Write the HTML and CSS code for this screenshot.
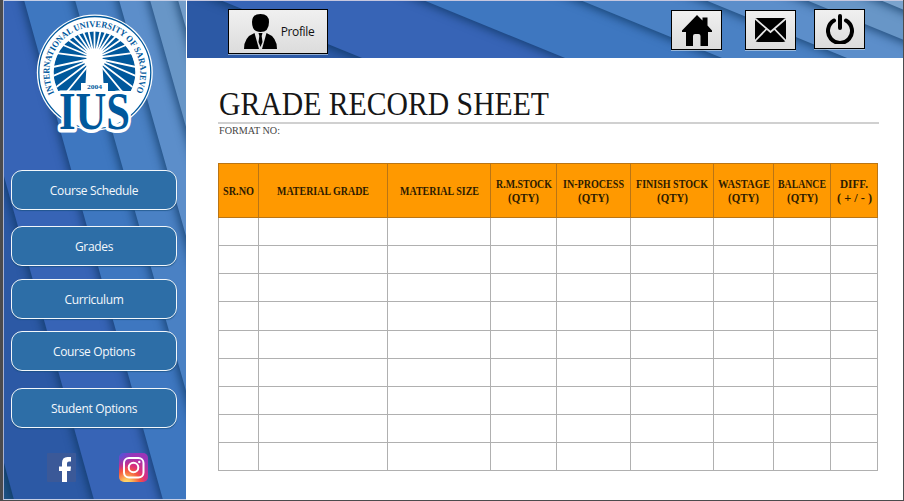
FILE: index.html
```html
<!DOCTYPE html>
<html lang="en">
<head>
<meta charset="utf-8">
<title>IUS Student Portal</title>
<link rel="stylesheet" href="styles.css">
</head>
<body>
<div class="window">
  <aside class="sidebar">
    <svg class="backdrop" viewBox="4 1 182 499" preserveAspectRatio="none" aria-hidden="true">
      <rect x="0" y="0" width="190" height="501" fill="#205486"/>
      <path class="band" fill="#2c59a5" d="M-121 0L14 501H260V-20H-126Z"/>
      <path class="band" fill="#3764b6" d="M-45 0L94 501H260V-20H-50Z"/>
      <path class="band" fill="#3e77c0" d="M24 0L163 501H260V-20H18Z"/>
      <path class="band" fill="#4a81c4" d="M75 0L217 501H260V-20H69Z"/>
      <path class="band" fill="#5c8eca" d="M119 0L261 501H280V-20H113Z"/>
      <path class="band" fill="#6896c7" d="M150 0L292 501H300V-20H144Z"/>
      <path class="band" fill="#739dca" d="M178 0L320 501H330V-20H172Z"/>
    </svg>
    <svg class="logo" viewBox="35 12 120 124" role="img" aria-label="International University of Sarajevo">
      <defs>
        <path id="ring" d="M54.3 93.2A45.500 45.500 0 1 1 135.3 93.2"/>
        <clipPath id="disc"><path d="M58.2 91A41 41 0 1 1 130.8 91Z"/></clipPath>
      </defs>
      <circle cx="94.8" cy="72.5" r="58" fill="#fff"/>
      <circle cx="94.8" cy="72.5" r="56" fill="none" stroke="#00589c" stroke-width="1.3"/>
      <g clip-path="url(#disc)">
        <circle cx="94.5" cy="72.5" r="41" fill="#00589c"/>
        <path stroke="#fff" stroke-width="1.8" d="M94.5 58L30 107M94.5 58L52 110M94.5 58L30 86M94.5 58L30 72M94.5 58L40 51M94.5 58L46 38M94.5 58L54 30M94.5 58L62 25M94.5 58L70 22M94.5 58L78 20M94.5 58L86 20M94.5 58V20M94.5 58L103 20M94.5 58L111 20M94.5 58L119 22M94.5 58L127 25M94.5 58L135 30M94.5 58L143 38M94.5 58L149 51M94.5 58L159 72M94.5 58L159 86M94.5 58L159 107M94.5 58L137 110"/>
        <path fill="#fff" d="M81 92V83H85.5L86.5 66L82 60L86.5 61V56Q87 49 94.5 48.5Q102 49 102.5 56V61L107 60L102.500 66L103.500 83H108V92Z"/>
      </g>
      <text class="ring-text"><textPath href="#ring" textLength="184" lengthAdjust="spacingAndGlyphs">INTERNATIONAL UNIVERSITY OF SARAJEVO</textPath></text>
      <text class="ius" x="59" y="129" textLength="71" lengthAdjust="spacingAndGlyphs">IUS</text>
      <text class="year" x="87" y="88.500" textLength="15" lengthAdjust="spacingAndGlyphs">2004</text>
    </svg>
    <nav class="menu">
      <button class="item">Course Schedule</button>
      <button class="item grades">Grades</button>
      <button class="item curriculum">Curriculum</button>
      <button class="item courses">Course Options</button>
      <button class="item students">Student Options</button>
    </nav>
    <div class="social">
      <svg width="29" height="29" viewBox="0 0 29 29" role="img" aria-label="Facebook">
        <rect width="29" height="29" rx="1" fill="#3b5998"/>
        <path fill="#fff" d="M15 29V18H12V13.500H15V10Q15 4 20.500 4H24V8.500H22Q20 8.500 20 10.500V13.500H24L23.500 18H20V29Z"/>
      </svg>
      <svg width="29" height="29" viewBox="0 0 29 29" role="img" aria-label="Instagram">
        <defs>
          <radialGradient id="warm" cx=".27" cy="1.050" r="1">
            <stop offset="0" stop-color="#ffe27a"/><stop offset=".15" stop-color="#fdc45a"/><stop offset=".45" stop-color="#f4573f"/><stop offset=".65" stop-color="#d92e7f"/><stop offset="1" stop-color="#9b35b8"/>
          </radialGradient>
          <radialGradient id="cool" cx="0" cy="0" r=".6">
            <stop offset="0" stop-color="#3c5fe0"/><stop offset="1" stop-color="#8038c8" stop-opacity="0"/>
          </radialGradient>
        </defs>
        <rect width="29" height="29" rx="5" fill="url(#warm)"/>
        <rect width="29" height="29" rx="5" fill="url(#cool)"/>
        <g fill="none" stroke="#fff" stroke-width="2"><rect x="5" y="5" width="19.500" height="19.500" rx="5"/><circle cx="14.500" cy="14.500" r="4.800"/></g>
        <circle cx="20.300" cy="9" r="1.200" fill="#fff"/>
      </svg>
    </div>
  </aside>
  <div class="content">
    <header class="topbar">
      <svg class="backdrop" viewBox="187 1 716 57" preserveAspectRatio="none" aria-hidden="true">
        <rect x="187" y="0" width="716" height="60" fill="#2c59a5"/>
        <path class="band" fill="#3764b6" d="M171 -20L220 0L362 58L411 78H950V-20Z"/>
        <path class="band" fill="#3e77c0" d="M374 -20L423 0L565 58L614 78H950V-20Z"/>
        <path class="band" fill="#4a81c4" d="M531 -20L580 0L722 58L771 78H950V-20Z"/>
        <path class="band" fill="#5c8eca" d="M656 -20L705 0L847 58L896 78H950V-20Z"/>
        <path class="band" fill="#6896c7" d="M757 -20L806 0L948 58V-20Z"/>
        <path class="band" fill="#7ba3cd" d="M831 -20L880 0L960 33V-20Z"/>
      </svg>
      <button class="tool profile">
        <svg width="33" height="35" viewBox="0 0 33 35" aria-hidden="true">
          <path d="M8 8Q8 0 16.500 0Q25 0 25 8Q25 18 16.500 18Q8 18 8 8ZM10.500 19L15 35H0Q0 23 10.500 19ZM22.500 19Q33 23 33 35H18ZM14.500 19H18.500L17.700 22L18.500 28L16.500 33L14.500 28L15.300 22Z"/>
        </svg>
        <span>Profile</span>
      </button>
      <button class="tool home" aria-label="Home">
        <svg width="30" height="31" viewBox="0 0 30 31"><path d="M0 15.500L15 0L20.500 5.500V2.500H25.500V10.500L30 15.500V17H26V31H18.500V21Q18.500 19 16.500 19H13Q11 19 11 21V31H4V17H0Z"/></svg>
      </button>
      <button class="tool mail" aria-label="Mail">
        <svg width="31" height="24" viewBox="0 0 31 24"><path d="M0 0H31V21Q31 24 28 24H3Q0 24 0 21Z"/><path class="fold" d="M0 .5L15.500 14L31 .5M0 23L11.500 11M31 23L19.500 11"/></svg>
      </button>
      <button class="tool power" aria-label="Log out">
        <svg width="28" height="30" viewBox="0 0 28 30"><path class="arc" d="M8 6.500A12 12 0 1 0 20 6.500M14 2V14"/></svg>
      </button>
    </header>
    <main class="sheet">
      <h1><svg width="332" height="36" viewBox="0 0 332 36"><text x="0" y="26" textLength="330" lengthAdjust="spacingAndGlyphs">GRADE RECORD SHEET</text></svg></h1>
      <p class="format"><svg width="63" height="13" viewBox="0 0 63 13"><text x="0" y="10" textLength="61" lengthAdjust="spacingAndGlyphs">FORMAT NO:</text></svg></p>
      <table>
        <colgroup><col class="c1"><col class="c2"><col class="c3"><col class="c4"><col class="c5"><col class="c6"><col class="c7"><col class="c8"><col class="c9"></colgroup>
        <thead><tr>
          <th><svg width="31" height="14"><text y="11" textLength="31" lengthAdjust="spacingAndGlyphs">SR.NO</text></svg></th>
          <th><svg width="92" height="14"><text y="11" textLength="92" lengthAdjust="spacingAndGlyphs">MATERIAL GRADE</text></svg></th>
          <th><svg width="79" height="14"><text y="11" textLength="79" lengthAdjust="spacingAndGlyphs">MATERIAL SIZE</text></svg></th>
          <th><svg width="56" height="14"><text y="11" textLength="56" lengthAdjust="spacingAndGlyphs">R.M.STOCK</text></svg><svg width="31" height="14"><text y="11" textLength="31" lengthAdjust="spacingAndGlyphs">(QTY)</text></svg></th>
          <th><svg width="61" height="14"><text y="11" textLength="61" lengthAdjust="spacingAndGlyphs">IN-PROCESS</text></svg><svg width="31" height="14"><text y="11" textLength="31" lengthAdjust="spacingAndGlyphs">(QTY)</text></svg></th>
          <th><svg width="72" height="14"><text y="11" textLength="72" lengthAdjust="spacingAndGlyphs">FINISH STOCK</text></svg><svg width="31" height="14"><text y="11" textLength="31" lengthAdjust="spacingAndGlyphs">(QTY)</text></svg></th>
          <th><svg width="52" height="14"><text y="11" textLength="52" lengthAdjust="spacingAndGlyphs">WASTAGE</text></svg><svg width="31" height="14"><text y="11" textLength="31" lengthAdjust="spacingAndGlyphs">(QTY)</text></svg></th>
          <th><svg width="48" height="14"><text y="11" textLength="48" lengthAdjust="spacingAndGlyphs">BALANCE</text></svg><svg width="31" height="14"><text y="11" textLength="31" lengthAdjust="spacingAndGlyphs">(QTY)</text></svg></th>
          <th><svg width="28" height="14"><text y="11" textLength="28" lengthAdjust="spacingAndGlyphs">DIFF.</text></svg><svg width="35" height="14"><text y="11" textLength="35" lengthAdjust="spacingAndGlyphs">( + / - )</text></svg></th>
        </tr></thead>
        <tbody>
          <tr><td></td><td></td><td></td><td></td><td></td><td></td><td></td><td></td><td></td></tr>
          <tr><td></td><td></td><td></td><td></td><td></td><td></td><td></td><td></td><td></td></tr>
          <tr><td></td><td></td><td></td><td></td><td></td><td></td><td></td><td></td><td></td></tr>
          <tr class="tall"><td></td><td></td><td></td><td></td><td></td><td></td><td></td><td></td><td></td></tr>
          <tr><td></td><td></td><td></td><td></td><td></td><td></td><td></td><td></td><td></td></tr>
          <tr><td></td><td></td><td></td><td></td><td></td><td></td><td></td><td></td><td></td></tr>
          <tr><td></td><td></td><td></td><td></td><td></td><td></td><td></td><td></td><td></td></tr>
          <tr><td></td><td></td><td></td><td></td><td></td><td></td><td></td><td></td><td></td></tr>
          <tr><td></td><td></td><td></td><td></td><td></td><td></td><td></td><td></td><td></td></tr>
        </tbody>
      </table>
    </main>
  </div>
</div>
</body>
</html>
```
FILE: styles.css
```css
* { box-sizing: border-box; }

body {
  margin: 0;
  font-family: "Open Sans", "Noto Sans", sans-serif;
  font-size: 12px;
}

button { font: inherit; letter-spacing: -.35px; padding: 0; margin: 0; }

.window {
  display: flex;
  width: 904px;
  height: 501px;
  border: solid #4b4b4d;
  border-width: 0 1px 1px 3px;
  background: #fff;
  overflow: hidden;
}

.sidebar {
  position: relative;
  isolation: isolate;
  width: 183px;
  flex: none;
  border-left: 1px solid #a9b2cf;
  border-top: 1px solid #c6cfe6;
  border-bottom: 1px solid #c6cfe6;
  overflow: hidden;
}

.backdrop {
  position: absolute;
  inset: 0;
  width: 100%;
  height: 100%;
  z-index: -1;
}

.band { filter: drop-shadow(-2px 2px 5px rgba(8, 48, 88, .7)); }

.logo {
  display: block;
  width: 120px;
  height: 124px;
  margin: 11px 0 0 31px;
  overflow: visible;
}

.ius {
  font: bold 53px "Liberation Serif", serif;
  fill: #00589c;
  stroke: #fff;
  stroke-width: 7px;
  stroke-linejoin: round;
  paint-order: stroke;
}

.ring-text { font: bold 9px "Liberation Serif", serif; fill: #00589c; }
.year { font: bold 7px "Liberation Serif", serif; fill: #00589c; }

.menu {
  display: flex;
  flex-direction: column;
  margin: 34px 0 0 7px;
  width: 166px;
}

.item {
  height: 40px;
  border: 1px solid #f2f7fb;
  border-radius: 11px;
  background: #2d6ea7;
  color: #f4f8fc;
  padding-top: 1px;
  box-shadow: 0 1px 1px rgba(20, 75, 120, .6);
}

.grades { margin-top: 16px; }
.curriculum { margin-top: 13px; }
.courses { margin-top: 12px; }
.students { margin-top: 17px; }

.social {
  display: flex;
  gap: 43px;
  margin: 25px 0 0 43px;
}

.content { flex: 1; margin-left: 1px; }

.topbar {
  position: relative;
  isolation: isolate;
  display: flex;
  align-items: flex-start;
  height: 58px;
  border-top: 1px solid #c6c7df;
  overflow: hidden;
}

.tool {
  display: flex;
  align-items: center;
  justify-content: center;
  width: 51px;
  height: 40px;
  margin-top: 9px;
  border: 1px solid #000;
  background: linear-gradient(#f0f0f0, #dcdcdc);
  color: #111;
  box-shadow: 0 1px 0 rgba(190, 210, 230, .7);
}

.profile {
  width: 100px;
  height: 45px;
  margin: 8px 0 0 41px;
  gap: 4px;
}

.home { margin-left: 343px; }
.mail { margin-left: 23px; }
.power { margin: 8px 0 0 18px; }
.fold { fill: none; stroke: #e6e6e6; stroke-width: 1.8px; }
.arc { fill: none; stroke: #000; stroke-width: 4px; stroke-linecap: round; }

.profile svg { margin-left: 2px; }

.sheet { padding: 31px 0 0 31px; }
.sheet svg { display: block; overflow: visible; }

h1 {
  width: 661px;
  height: 35px;
  margin: 0;
  padding-left: 1px;
  border-bottom: 2px solid #d0d0d0;
  font: 34.5px "Liberation Serif", serif;
  fill: #161616;
}

.format {
  margin: 0;
  height: 39px;
  padding-left: 1px;
  font: 10.5px "Liberation Serif", serif;
  fill: #444;
}

table {
  width: 660px;
  table-layout: fixed;
  border-collapse: collapse;
}

.c1 { width: 40px; }
.c2 { width: 129px; }
.c3 { width: 103px; }
.c4 { width: 66px; }
.c5 { width: 74px; }
.c6 { width: 83px; }
.c7 { width: 60px; }
.c8 { width: 57px; }
.c9 { width: 47px; }

tr { height: 28px; }
.tall { height: 29px; }
thead tr { height: 54px; }

th, td { padding: 0; border: 1px solid #b0b0b0; }

th {
  background: #ff9900;
  border-color: #ba7515;
  font: bold 12px "Liberation Serif", serif;
  fill: #2e1c00;
  vertical-align: middle;
}

th svg { margin: 0 auto; }
```
